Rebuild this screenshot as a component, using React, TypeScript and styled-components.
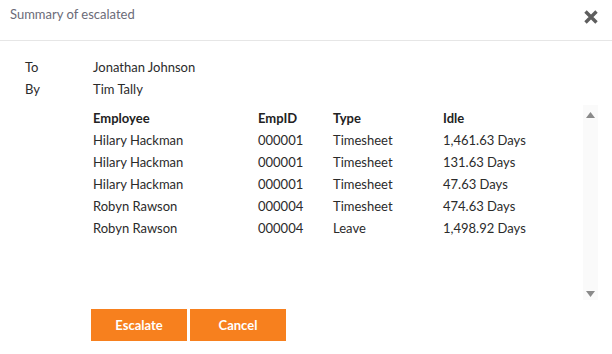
import React from "react";
import styled, { createGlobalStyle } from "styled-components";

const Global = createGlobalStyle`
  html, body { margin: 0; padding: 0; background: #ffffff; }
  body { font-family: Lato, "Open Sans", sans-serif; }
`;

const Dialog = styled.div`
  width: 612px;
  height: 354px;
  background: #fff;
  display: flex;
  flex-direction: column;
  color: #2b2b2b;
  font-size: 13px;
`;

const Header = styled.div`
  height: 40px;
  border-bottom: 1px solid #e6e6e6;
  display: flex;
  align-items: center;
  justify-content: space-between;
  padding: 0 14px 0 10px;
  box-sizing: content-box;
`;

const Title = styled.div`
  color: #6b6b78;
  font-size: 13px;
  margin-top: -12px;
`;

const Close = styled.button`
  border: 0;
  background: none;
  padding: 0;
  width: 14px;
  height: 14px;
  margin-top: -6px;
  cursor: pointer;
  display: flex;
`;

const Body = styled.div`
  padding: 15px 14px 0 25px;
  display: flex;
  flex-direction: column;
`;

const InfoRow = styled.div`
  display: grid;
  grid-template-columns: 68px 1fr;
  height: 22px;
  align-items: center;
`;

const TableArea = styled.div`
  margin-top: 5px;
  height: 195px;
  display: flex;
`;

const TableWrap = styled.div`
  flex: 1;
  padding: 2px 0 0 68px;
`;

const Table = styled.table`
  border-collapse: collapse;
  font-size: 13px;
`;

const Th = styled.th<{ $w: number }>`
  width: ${(p) => p.$w}px;
  text-align: left;
  font-weight: 700;
  height: 22px;
  padding: 0;
  color: #222;
`;

const Td = styled.td`
  height: 22px;
  padding: 0;
`;

const Scrollbar = styled.div`
  width: 15px;
  background: #fafafa;
  display: flex;
  flex-direction: column;
  justify-content: space-between;
  align-items: center;
  padding: 7px 0 3px;
  box-sizing: border-box;
`;

const Footer = styled.div`
  display: flex;
  gap: 3px;
  padding: 9px 0 0 91px;
`;

const Button = styled.button`
  width: 96px;
  height: 32px;
  border: 0;
  background: #f7801e;
  color: #fff;
  font-family: Lato, "Open Sans", sans-serif;
  font-size: 13px;
  font-weight: 700;
  cursor: pointer;
`;

const rows = [
  ["Hilary Hackman", "000001", "Timesheet", "1,461.63 Days"],
  ["Hilary Hackman", "000001", "Timesheet", "131.63 Days"],
  ["Hilary Hackman", "000001", "Timesheet", "47.63 Days"],
  ["Robyn Rawson", "000004", "Timesheet", "474.63 Days"],
  ["Robyn Rawson", "000004", "Leave", "1,498.92 Days"],
];

export default function App() {
  return (
    <>
      <Global />
      <Dialog>
        <Header>
          <Title>Summary of escalated</Title>
          <Close aria-label="Close">
            <svg width="14" height="14" viewBox="0 0 14 14">
              <path d="M1.5 1.5 L12.5 12.5 M12.5 1.5 L1.5 12.5" stroke="#5e5e5e" strokeWidth="3.4" />
            </svg>
          </Close>
        </Header>
        <Body>
          <InfoRow>
            <span>To</span>
            <span>Jonathan Johnson</span>
          </InfoRow>
          <InfoRow>
            <span>By</span>
            <span>Tim Tally</span>
          </InfoRow>
          <TableArea>
            <TableWrap>
              <Table>
                <thead>
                  <tr>
                    <Th $w={165}>Employee</Th>
                    <Th $w={75}>EmpID</Th>
                    <Th $w={110}>Type</Th>
                    <Th $w={110}>Idle</Th>
                  </tr>
                </thead>
                <tbody>
                  {rows.map((r, i) => (
                    <tr key={i}>
                      {r.map((c, j) => (
                        <Td key={j}>{c}</Td>
                      ))}
                    </tr>
                  ))}
                </tbody>
              </Table>
            </TableWrap>
            <Scrollbar>
              <svg width="9" height="6" viewBox="0 0 9 6">
                <path d="M4.5 0 L9 6 L0 6 Z" fill="#8a8a8a" />
              </svg>
              <svg width="9" height="6" viewBox="0 0 9 6">
                <path d="M0 0 L9 0 L4.5 6 Z" fill="#8a8a8a" />
              </svg>
            </Scrollbar>
          </TableArea>
        </Body>
        <Footer>
          <Button>Escalate</Button>
          <Button>Cancel</Button>
        </Footer>
      </Dialog>
    </>
  );
}
